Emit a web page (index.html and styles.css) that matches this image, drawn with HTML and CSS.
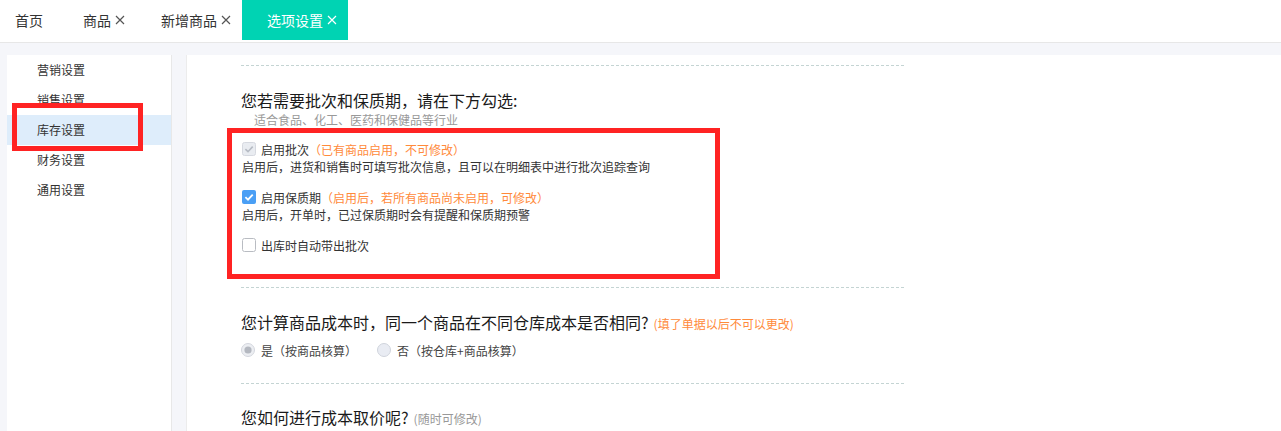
FILE: index.html
```html
<!DOCTYPE html>
<html lang="zh-CN">
<head>
  <meta charset="UTF-8">
  <title>选项设置</title>
  <link rel="stylesheet" href="styles.css">
</head>
<body>
  <div class="tab-bar">
    <div class="tab tab-home">首页</div>
    <div class="tab">商品<svg class="tab-close" viewBox="0 0 10 10"><path d="M1 1L9 9M9 1L1 9"/></svg></div>
    <div class="tab">新增商品<svg class="tab-close" viewBox="0 0 10 10"><path d="M1 1L9 9M9 1L1 9"/></svg></div>
    <div class="tab active">选项设置<svg class="tab-close" viewBox="0 0 10 10"><path d="M1 1L9 9M9 1L1 9"/></svg></div>
  </div>

  <div class="page">
    <div class="side-menu">
      <div class="menu-item">营销设置</div>
      <div class="menu-item">销售设置</div>
      <div class="menu-item current">库存设置</div>
      <div class="menu-item">财务设置</div>
      <div class="menu-item">通用设置</div>
      <div class="mark-box side-mark"></div>
    </div>

    <div class="main">
      <div class="section first">
        <div class="q-title">您若需要批次和保质期，请在下方勾选:</div>
        <div class="q-sub">适合食品、化工、医药和保健品等行业</div>
        <div class="option-group">
          <div class="option">
            <div class="check-row">
              <svg class="box" viewBox="0 0 14 14"><rect x="0.5" y="0.5" width="13" height="13" rx="2" fill="#e9ecf1" stroke="#d6d9e0"/><path d="M3.4 7.2L6 9.7L10.7 4.6" fill="none" stroke="#b6bbc4" stroke-width="1.6"/></svg>
              <span>启用批次</span><span class="warn">（已有商品启用，不可修改）</span>
            </div>
            <div class="desc">启用后，进货和销售时可填写批次信息，且可以在明细表中进行批次追踪查询</div>
          </div>
          <div class="option">
            <div class="check-row">
              <svg class="box" viewBox="0 0 14 14"><rect x="0" y="0" width="14" height="14" rx="2" fill="#4a9ff5"/><path d="M3.4 7.2L6 9.7L10.7 4.6" fill="none" stroke="#fff" stroke-width="1.8"/></svg>
              <span>启用保质期</span><span class="warn">（启用后，若所有商品尚未启用，可修改）</span>
            </div>
            <div class="desc">启用后，开单时，已过保质期时会有提醒和保质期预警</div>
          </div>
          <div class="option">
            <div class="check-row">
              <svg class="box" viewBox="0 0 14 14"><rect x="0.5" y="0.5" width="13" height="13" rx="2" fill="#fff" stroke="#b9bcc2"/></svg>
              <span>出库时自动带出批次</span>
            </div>
          </div>
        </div>
      </div>

      <div class="section second">
        <div class="q-title">您计算商品成本时，同一个商品在不同仓库成本是否相同?<span class="note warn">(填了单据以后不可以更改)</span></div>
        <div class="radio-row">
          <label class="radio">
            <svg class="dot" viewBox="0 0 14 14"><circle cx="7" cy="7" r="6.5" fill="#eceef2" stroke="#d3d6dd"/><circle cx="7" cy="7" r="3.6" fill="#b4b8c0"/></svg>
            是（按商品核算）
          </label>
          <label class="radio">
            <svg class="dot" viewBox="0 0 14 14"><circle cx="7" cy="7" r="6.5" fill="#e9ecf3" stroke="#cfd3db"/></svg>
            否（按仓库+商品核算）
          </label>
        </div>
      </div>

      <div class="section third">
        <div class="q-title">您如何进行成本取价呢?<span class="note muted">(随时可修改)</span></div>
      </div>
    </div>
  </div>
</body>
</html>
```
FILE: styles.css
```css
* {margin: 0; padding: 0; box-sizing: border-box;}
body {font-family: "Noto Sans CJK SC", "Noto Sans", sans-serif; color: #333; background: #f5f6fa; width: 1281px; height: 431px; overflow: hidden;}

.tab-bar {height: 43px; background: #fff; border-bottom: 1px solid #e7e7e7; display: flex; align-items: flex-start;}
.tab {height: 40px; display: flex; align-items: center; padding: 0 11px 0 25px; font-size: 14px; color: #333;}
.tab-home {padding: 0 15px 0 15px;}
.tab-close {width: 10px; height: 10px; margin-left: 4px; stroke: #555; stroke-width: 1.2; fill: none;}
.tab.active {background: #00d3b3; color: #fff;}
.tab.active .tab-close {stroke: #fff;}

.page {display: flex; padding: 12px 0 0 7px; height: 388px;}

.side-menu {position: relative; width: 165px; background: #fff; border-right: 1px solid #e8e8e8;}
.menu-item {height: 30px; line-height: 30px; padding-left: 30px; font-size: 12px; color: #333;}
.menu-item.current {background: #deedfb;}
.mark-box {border: 5px solid #ff2323;}
.side-mark {position: absolute; left: 5px; top: 48px; width: 131px; height: 48px;}

.main {flex: 1; margin-left: 14px; background: #fff; border-left: 1px solid #ececec; padding: 10px 0 0 54px;}

.section {width: 664px; background: linear-gradient(to right, #c4d4d3 3px, transparent 3px) 0 0 / 5px 1px repeat-x;}
.section.first {padding: 23px 0 8px;}
.section.second {padding: 23px 0 24px;}
.section.third {padding: 22px 0 0;}

.q-title {font-size: 16px; line-height: 24px; color: #1a1a1a;}
.q-sub {font-size: 12px; line-height: 16px; color: #999; padding-left: 13px;}
.note {font-size: 12px; margin-left: 5px;}
.warn {color: #ff8a3b;}
.muted {color: #999;}

.option-group {margin-left: -14px; width: 493px; border: 5px solid #ff2323; padding: 7px 10px 20px 10px; display: flex; flex-direction: column; gap: 12px;}
.check-row {display: flex; align-items: center; height: 18px; font-size: 12px; color: #333;}
.box {width: 14px; height: 14px; margin-right: 5px;}
.desc {font-size: 12px; line-height: 18px; color: #333;}

.radio-row {display: flex; margin-top: 5px; height: 18px;}
.radio {display: flex; align-items: center; font-size: 12px; color: #444; margin-right: 20px;}
.dot {width: 14px; height: 14px; margin-right: 6px;}
```
